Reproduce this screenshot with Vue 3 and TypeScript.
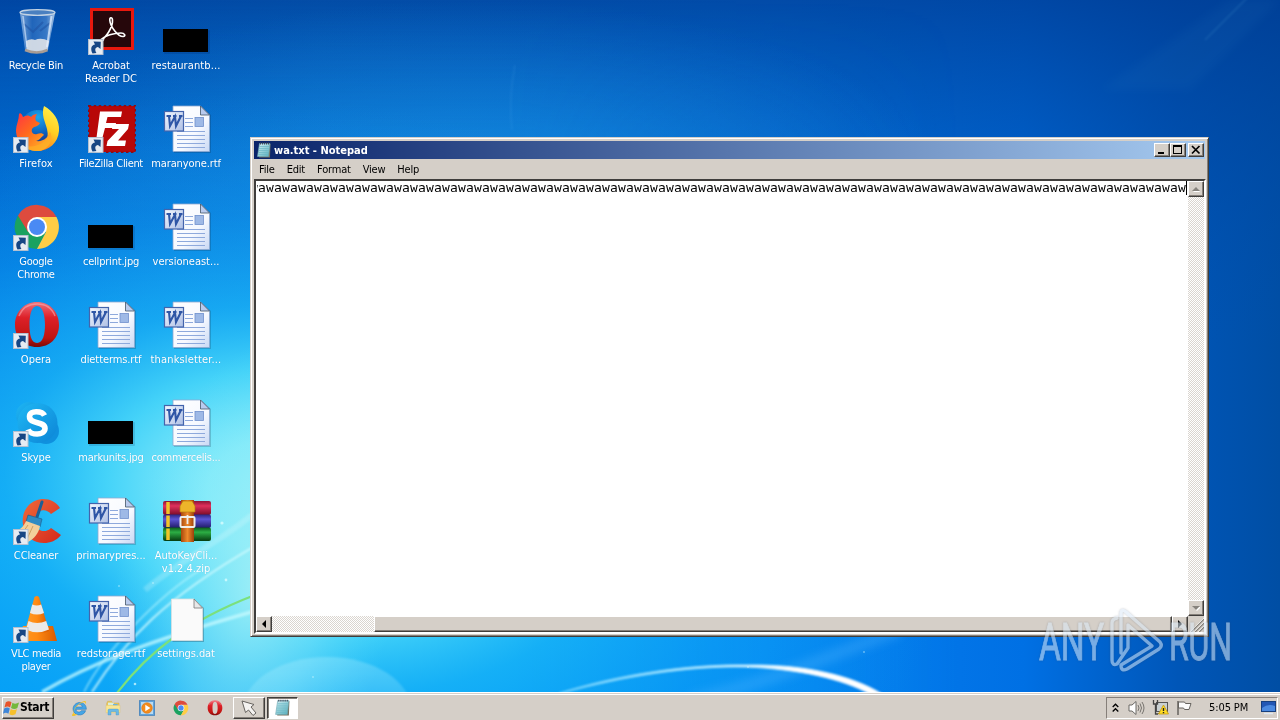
<script setup lang="ts">
interface DesktopItem {
  icon: string
  lines: string[]
  shortcut?: boolean
  spacing?: number
}

const items: DesktopItem[] = [
  { icon: 'bin', lines: ['Recycle Bin'] },
  { icon: 'acrobat', lines: ['Acrobat', 'Reader DC'], shortcut: true, spacing: -0.1 },
  { icon: 'thumb', lines: ['restaurantb...'], spacing: 0.12 },
  { icon: 'firefox', lines: ['Firefox'], shortcut: true, spacing: 0.1 },
  { icon: 'filezilla', lines: ['FileZilla Client'], shortcut: true, spacing: -0.35 },
  { icon: 'word', lines: ['maranyone.rtf'], spacing: -0.1 },
  { icon: 'chrome', lines: ['Google', 'Chrome'], shortcut: true, spacing: -0.25 },
  { icon: 'thumb', lines: ['cellprint.jpg'], spacing: -0.2 },
  { icon: 'word', lines: ['versioneast...'], spacing: 0 },
  { icon: 'opera', lines: ['Opera'], shortcut: true, spacing: 0 },
  { icon: 'word', lines: ['dietterms.rtf'], spacing: -0.1 },
  { icon: 'word', lines: ['thanksletter...'], spacing: 0.15 },
  { icon: 'skype', lines: ['Skype'], shortcut: true, spacing: -0.1 },
  { icon: 'thumb', lines: ['markunits.jpg'], spacing: -0.2 },
  { icon: 'word', lines: ['commercelis...'] },
  { icon: 'ccleaner', lines: ['CCleaner'], shortcut: true, spacing: -0.1 },
  { icon: 'word', lines: ['primarypres...'], spacing: 0 },
  { icon: 'winrar', lines: ['AutoKeyCli...', 'v1.2.4.zip'], spacing: 0 },
  { icon: 'vlc', lines: ['VLC media', 'player'], shortcut: true, spacing: -0.35 },
  { icon: 'word', lines: ['redstorage.rtf'], spacing: 0 },
  { icon: 'file', lines: ['settings.dat'], spacing: -0.1 },
]

const menus = ['File', 'Edit', 'Format', 'View', 'Help']
const content = 'w' + 'aw'.repeat(58)
const launchers = ['ie', 'explorer', 'wmp', 'chrome', 'opera']
</script>

<template>
  <div class="screen">
    <svg class="defs" width="0" height="0" aria-hidden="true">
      <defs>
        <linearGradient id="gGlass" x1="0" x2="1" y1="0" y2="0"><stop offset="0" stop-color="#a9c8ea" stop-opacity=".75" /><stop offset=".35" stop-color="#3b79c6" stop-opacity=".55" /><stop offset=".75" stop-color="#5a93d6" stop-opacity=".6" /><stop offset="1" stop-color="#cfe0f2" stop-opacity=".85" /></linearGradient>
        <linearGradient id="gFox" x1="0" x2=".8" y1=".1" y2="1"><stop offset="0" stop-color="#ff3b3f" /><stop offset=".45" stop-color="#ff6a1c" /><stop offset="1" stop-color="#ffb52a" /></linearGradient>
        <linearGradient id="gTail" x1=".6" x2=".3" y1="0" y2="1"><stop offset="0" stop-color="#fff04a" /><stop offset=".5" stop-color="#ffcf22" /><stop offset="1" stop-color="#ff7a1e" /></linearGradient>
        <radialGradient id="gGlobe" cx=".5" cy=".2" r=".8"><stop offset="0" stop-color="#19a7ee" /><stop offset=".6" stop-color="#0c5dbb" /><stop offset="1" stop-color="#172a86" /></radialGradient>
        <linearGradient id="gOpera" x1="0" x2="0" y1="0" y2="1"><stop offset="0" stop-color="#f0707c" /><stop offset=".35" stop-color="#dd2028" /><stop offset=".8" stop-color="#c01410" /><stop offset="1" stop-color="#7a0808" /></linearGradient>
        <linearGradient id="gSkype" x1="0" x2="1" y1="0" y2="1"><stop offset="0" stop-color="#1fb8f4" /><stop offset="1" stop-color="#0c84d6" /></linearGradient>
        <linearGradient id="gPage" x1="0" x2="1" y1="0" y2="1"><stop offset="0" stop-color="#fff" /><stop offset=".6" stop-color="#f6f9ff" /><stop offset="1" stop-color="#c9d8f4" /></linearGradient>
        <linearGradient id="gBadge" x1="0" x2="1" y1="0" y2="1"><stop offset="0" stop-color="#f4f8ff" /><stop offset="1" stop-color="#aebfe4" /></linearGradient>
        <linearGradient id="gCc" x1="0" x2="1" y1="0" y2="1"><stop offset="0" stop-color="#f06a3a" /><stop offset="1" stop-color="#d4281c" /></linearGradient>
        <linearGradient id="gCone" x1="0" x2="1"><stop offset="0" stop-color="#ff9c26" /><stop offset=".5" stop-color="#ff8a12" /><stop offset="1" stop-color="#d85a00" /></linearGradient>
        <linearGradient id="gRed" x1="0" x2="0" y1="0" y2="1"><stop offset="0" stop-color="#8c1436" /><stop offset=".35" stop-color="#e0305c" /><stop offset="1" stop-color="#7a0c28" /></linearGradient>
        <linearGradient id="gBlu" x1="0" x2="0" y1="0" y2="1"><stop offset="0" stop-color="#2c2680" /><stop offset=".35" stop-color="#5c54d4" /><stop offset="1" stop-color="#201a68" /></linearGradient>
        <linearGradient id="gGrn" x1="0" x2="0" y1="0" y2="1"><stop offset="0" stop-color="#0c5a1c" /><stop offset=".35" stop-color="#2cae44" /><stop offset="1" stop-color="#063c10" /></linearGradient>
        <linearGradient id="gStrap" x1="0" x2="1"><stop offset="0" stop-color="#a8480c" /><stop offset=".5" stop-color="#ee8a2c" /><stop offset="1" stop-color="#9c400a" /></linearGradient>
        <linearGradient id="gPad" x1="0" x2="1" y1="0" y2="1"><stop offset="0" stop-color="#d6f0f4" /><stop offset="1" stop-color="#55aebc" /></linearGradient>
      </defs>

      <symbol id="bin" viewBox="0 0 48 48">
        <path d="M7 6 L12 43 Q24 48 35 43 L42 6 Z" fill="url(#gGlass)" />
        <path d="M13 34 Q18 31 22 33 Q28 30 36 34 L34.500 43 Q24 47 13.500 43 Z" fill="#dfe3e8" opacity=".9" />
        <path d="M12 43 Q24 48 34.500 43" fill="none" stroke="#a89c94" stroke-width="2.500" />
        <path d="M11 17 L20 25 L30 15 M27 24 L37 16" stroke="#1d4fa0" stroke-width="2" opacity=".5" fill="none" />
        <ellipse cx="24.500" cy="5.500" rx="17.500" ry="2.800" fill="#4a80c0" stroke="#c4d4e4" stroke-width="1.300" />
        <path d="M10 9 L14 40" stroke="#dcecff" stroke-width="1.500" opacity=".6" />
        <path d="M38.500 9 L34 40" stroke="#e8f2ff" stroke-width="2" opacity=".7" />
      </symbol>

      <symbol id="acrobat" viewBox="0 0 48 48">
        <rect x="2" y="1" width="44" height="42" fill="#e8180e" />
        <rect x="5" y="4" width="38" height="36" fill="#26070b" />
        <path d="M12 34 C18 31 25 20 24.500 13 C24.300 10 21.500 10 21.800 13.500 C22.500 20 30 29.500 35 29.500 C38.500 29 36.500 26 33 26 C26 26 17 28.500 13 32.500 C10 35.500 12.500 37 16 32" fill="none" stroke="#fff" stroke-width="1.600" />
      </symbol>

      <symbol id="thumb" viewBox="0 0 48 48">
        <rect x="1" y="23" width="46" height="24" rx="1" fill="#003" opacity=".12" />
        <rect x="0" y="22" width="45" height="23" fill="#000" />
      </symbol>

      <symbol id="firefox" viewBox="0 0 48 48">
        <circle cx="25" cy="23" r="18" fill="url(#gGlobe)" />
        <path d="M31 1 C40 6 47 15 46 26 C45 38 36 46 24 46 C30 42 37 36 34 24 C32 16 28 10 31 1 Z" fill="url(#gTail)" />
        <path d="M6 9 C7 7 9 9 10 12 C13 10 16 10 18 12 C19 10 22 9 24 9 C22 12 22 14 23 16 L27 18 C25 22 21 21 19 24 C18 27 20 30 24 29 C27 28 30 28 31 30 C28 32 27 35 23 36 C31 37 35 32 37 27 C40 38 33 46 24 46 C12 46 3 37 3 25 C3 20 6 15 6 9 Z" fill="url(#gFox)" />
        <path d="M37 27 C42 36 34 46 24 46 C18 46 13 44 9 40 C20 44 33 40 37 27 Z" fill="#ffad26" opacity=".75" />
      </symbol>

      <symbol id="filezilla" viewBox="0 0 48 48">
        <rect x="1" y="1" width="46" height="46" fill="#b80808" />
        <rect x=".7" y=".7" width="46.600" height="46.600" fill="none" stroke="#8c0a14" stroke-width="1.400" stroke-dasharray="2.500 2.500" />
        <path d="M12 6.500 H34 L33 12 H19.500 L18 18 H28 L27 23 H17 L12.500 40 H7.500 Z" fill="#fff" />
        <path d="M25 19 H41 L40 24 L30 35.500 H38 L37 41 H18.500 L19.500 36 L31 24 H24 Z" fill="#fff" />
      </symbol>

      <symbol id="chrome" viewBox="0 0 48 48">
        <path d="M24 24 L5 12.500 A22 22 0 0 0 24 46 L33 29 Z" fill="#1aa260" />
        <path d="M24 14 H43.500 A22 22 0 0 1 24 46 L33 29 Z" fill="#ffcd46" />
        <path d="M5 12.500 A22 22 0 0 1 43.500 14 H24 L15 29 Z" fill="#dd4b3e" />
        <circle cx="24" cy="24" r="10" fill="#fff" /><circle cx="24" cy="24" r="8" fill="#4a8af4" />
      </symbol>

      <symbol id="opera" viewBox="0 0 48 48">
        <path fill-rule="evenodd" d="M24 1 C37 1 46 11 46 24 C46 37 37 46 24 46 C11 46 2 37 2 24 C2 11 11 1 24 1 Z M24 5 C18 5 16.500 15 16.500 24 C16.500 33 18 42 24 42 C30 42 32 33 32 24 C32 15 30 5 24 5 Z" fill="url(#gOpera)" />
        <path d="M6 15 C10 5 18 3 24 3 C32 3 39 7 42 15" fill="none" stroke="#fbb" stroke-width="1.500" opacity=".5" />
      </symbol>

      <symbol id="skype" viewBox="0 0 48 48">
        <circle cx="16" cy="16" r="13" fill="url(#gSkype)" /><circle cx="33" cy="32" r="13" fill="#0f90de" />
        <circle cx="24.500" cy="24" r="20" fill="url(#gSkype)" />
        <path d="M31.500 16.500 C29 11.500 16.500 11 16.500 17.500 C16.500 26 32 21.500 32 29.500 C31.500 37 17.500 36.500 15 30.500" fill="none" stroke="#fff" stroke-width="5.600" />
      </symbol>

      <symbol id="word" viewBox="0 0 48 48">
        <path d="M11 2 H39 L48 10 V48 H11 Z" fill="#123" opacity=".2" />
        <path d="M10 1 H37.500 L46.500 10 V46.500 H10 Z" fill="url(#gPage)" stroke="#8fa8d0" stroke-width=".8" />
        <path d="M37.500 1 V10 H46.500 Z" fill="#b9cbee" stroke="#456" stroke-width=".8" />
        <path d="M22 13.500 H30 M22 17.500 H30 M22 21.500 H30 M14 26.500 H42 M14 30.500 H42 M14 34.500 H42 M14 38.500 H42 M14 42.500 H42" stroke="#8ea9dc" stroke-width="1" />
        <rect x="32" y="12.500" width="8.500" height="9" fill="#9eb9e6" stroke="#6f90cc" stroke-width=".8" />
        <rect x="1.500" y="6.500" width="19" height="19.500" fill="url(#gBadge)" stroke="#4464ac" stroke-width="1.200" />
        <path d="M3.500 11 H8 M10 11 H13.500 M16 11 H19.500 M6 11 L7 21 L12 11.500 L13 21 L18 11" fill="none" stroke="#2f56a6" stroke-width="2.100" />
      </symbol>

      <symbol id="file" viewBox="0 0 48 48">
        <path d="M9.500 5 H32 L41 13 V47 H9.500 Z" fill="#234" opacity=".3" />
        <path d="M8.500 4 H31 L39.500 13 V45.500 H8.500 Z" fill="#fafafa" stroke="#dcdfe0" stroke-width=".8" />
        <path d="M31 4 V13 H39.500 Z" fill="#e8e8e8" stroke="#777" stroke-width=".8" />
      </symbol>

      <symbol id="ccleaner" viewBox="0 0 48 48">
        <path fill="url(#gCc)" d="M47 11 L38 17 C31 9 21 15 22 25 C23 34 32 37 38 31 L48 38 C40 48 26 48 18 42 C8 33 7 18 15 9 C24 -1 40 0 47 11 Z" />
        <path d="M29 5 L24 20" stroke="#1d5f96" stroke-width="3" stroke-linecap="round" />
        <path d="M15 18 L29 22 L27 30 L13 25 Z" fill="#2f8cc4" stroke="#1a5a8a" stroke-width=".6" />
        <path d="M13 24 L27 29 C26 36 21 42 15 45 L1 35 C7 33 11 29 13 24 Z" fill="#f3cf9a" />
        <path d="M15 28 L8 38 M20 29 L14 42" stroke="#cf9f62" stroke-width="1" />
      </symbol>

      <symbol id="winrar" viewBox="0 0 48 48">
        <rect x="0" y="4" width="48" height="14" rx="2" fill="url(#gRed)" />
        <rect x="0" y="17.500" width="48" height="13.500" rx="2" fill="url(#gBlu)" />
        <rect x="0" y="30.500" width="48" height="13.500" rx="2" fill="url(#gGrn)" />
        <path d="M5 5 V17 M5 18.500 V30 M5 31.500 V43" stroke="#f0c428" stroke-width="3.500" />
        <rect x="18" y="3" width="13" height="42" fill="url(#gStrap)" />
        <path d="M20 4 H29 L32 9 V15 H17 V9 Z" fill="#edb52a" stroke="#b87a10" stroke-width=".7" />
        <rect x="17.500" y="20" width="14" height="10" rx="1" fill="none" stroke="#f0eee8" stroke-width="2" />
        <path d="M24.500 18 V27" stroke="#eee" stroke-width="1.800" />
      </symbol>

      <symbol id="vlc" viewBox="0 0 48 48">
        <path d="M10 31 H40 L44 46 H4 Z" fill="url(#gCone)" />
        <path d="M21.500 2 Q24 0 26 2 L36 36 Q24 42 12 36 Z" fill="url(#gCone)" />
        <path d="M19.200 9.500 Q24 11.500 28.200 9.500 L31 18 Q24 21 17 18 Z M15.500 26 Q24 30 33.200 26 L36 34.500 Q24 40 13 34.500 Z" fill="#eceae8" />
      </symbol>

      <symbol id="shortcut" viewBox="0 0 16 16">
        <rect x=".5" y=".5" width="14.500" height="15" fill="#e6ebf2" stroke="#b4c0d0" />
        <path d="M4.500 14.500 C2 9.500 3.500 6 7 5.500 L5.500 2.500 L12.800 2.800 L12.500 10 L10 8 C7 8.500 6.500 11 8.500 14 Z" fill="#174684" />
      </symbol>

      <symbol id="ie" viewBox="0 0 48 48">
        <path d="M44 32 H31 C27 39 15 37 15 28 H46 C47 2 9 0 6 26 C5 48 38 52 44 32 Z M15 21 C17 11 32 10 34 21 Z" fill="#45a6e6" stroke="#1c70b8" stroke-width="1.500" fill-rule="evenodd" />
        <path d="M7 40 C-4 50 10 51 20 43 C7 44 5 36 13 25 C21 13 35 5 41 7 C45 9 43 13 41 16 C49 7 45 0 34 5 C20 11 6 26 7 40 Z" fill="#f2c32c" />
      </symbol>
      <symbol id="explorer" viewBox="0 0 48 48">
        <path d="M5 10 L8 4 H20 L23 9 H42 V20 H5 Z" fill="#e9c85c" stroke="#c79c34" />
        <path d="M9 8 H26 V16 H9 Z" fill="#d9efe0" /><path d="M24 12 H38 V18 H24 Z" fill="#68b4e4" />
        <path d="M3 16 H45 V38 H3 Z" fill="#f9e694" stroke="#dfbd5a" />
        <path d="M9 45 V31 Q9 27 14 27 H36 Q41 27 41 31 V45 H33 V35 H18 V45 Z" fill="#69b9e6" stroke="#3d8cc0" />
      </symbol>
      <symbol id="wmp" viewBox="0 0 48 48">
        <rect x="1" y="2" width="46" height="44" fill="#5fa3dc" stroke="#3a78b4" stroke-width="2" />
        <rect x="6" y="6" width="36" height="36" fill="#b9dbf2" />
        <circle cx="24" cy="24" r="16" fill="#f38b1d" stroke="#d96a08" stroke-width="1.500" /><path d="M19 14 L34 24 L19 34 Z" fill="#fff" />
      </symbol>
      <symbol id="notepad" viewBox="0 0 16 16">
        <path d="M4 2 H14.500 L14 15.500 H3 Z" fill="#76705c" />
        <path d="M3.500 1.500 H14 L12.500 14.500 H1.500 Z" fill="url(#gPad)" stroke="#70a8b4" stroke-width=".6" />
        <path d="M3.500 4.500 H13 M3.200 6.500 H12.800 M2.800 8.500 H12.500 M2.500 10.500 H12.300 M2.300 12.500 H12.200" stroke="#68b6c4" stroke-width=".7" />
        <path d="M4 1.500 H14" stroke="#445" stroke-width="1.800" stroke-dasharray="1 1" />
      </symbol>
    </svg>

    <svg class="wallpaper" viewBox="0 0 1280 692" preserveAspectRatio="none" aria-hidden="true">
      <defs>
        <linearGradient id="base" x1="0" x2="1" y1="0" y2="0"><stop offset="0" stop-color="#006cdc" /><stop offset=".25" stop-color="#0f88ea" /><stop offset=".6" stop-color="#0880f0" /><stop offset=".8" stop-color="#0070e4" /><stop offset=".92" stop-color="#0056b8" /><stop offset="1" stop-color="#004ea4" /></linearGradient>
        <linearGradient id="dark" x1="0" x2="0" y1="0" y2="1"><stop offset="0" stop-color="#003c94" stop-opacity=".78" /><stop offset=".25" stop-color="#0048a4" stop-opacity=".45" /><stop offset=".5" stop-color="#0050b0" stop-opacity="0" /></linearGradient>
        <linearGradient id="leftGlow" x1="0" x2="0" y1="0" y2="1"><stop offset="0" stop-color="#00a0f8" stop-opacity="0" /><stop offset=".3" stop-color="#0090f0" stop-opacity=".3" /><stop offset=".75" stop-color="#00a0f6" stop-opacity="1" /><stop offset="1" stop-color="#00a0f8" /></linearGradient>
        <linearGradient id="leftFade" x1="0" x2="1"><stop offset="0" stop-color="#fff" /><stop offset=".4" stop-color="#fff" /><stop offset=".75" stop-color="#000" /></linearGradient>
        <mask id="leftMask"><rect width="1280" height="692" fill="url(#leftFade)" /></mask>
        <radialGradient id="glow" gradientUnits="userSpaceOnUse" cx="0" cy="0" r="1" gradientTransform="translate(310 500) rotate(8) scale(640 400)"><stop offset="0" stop-color="#b4f6fa" /><stop offset=".16" stop-color="#90eefa" /><stop offset=".32" stop-color="#48d6f9" stop-opacity=".95" /><stop offset=".48" stop-color="#20b8f6" stop-opacity=".65" /><stop offset=".7" stop-color="#18a4f4" stop-opacity=".28" /><stop offset="1" stop-color="#1290ee" stop-opacity="0" /></radialGradient>
        <radialGradient id="pale" gradientUnits="userSpaceOnUse" cx="0" cy="0" r="1" gradientTransform="translate(255 590) rotate(-78) scale(260 140)"><stop offset="0" stop-color="#a4f0f6" stop-opacity=".85" /><stop offset=".5" stop-color="#80e8f8" stop-opacity=".5" /><stop offset="1" stop-color="#50dcfa" stop-opacity="0" /></radialGradient>
        <radialGradient id="topGlow" gradientUnits="userSpaceOnUse" cx="0" cy="0" r="1" gradientTransform="translate(470 190) scale(480 190)"><stop offset="0" stop-color="#2094e2" stop-opacity=".8" /><stop offset="1" stop-color="#1478d0" stop-opacity="0" /></radialGradient>
        <linearGradient id="arc" gradientUnits="userSpaceOnUse" x1="560" x2="880" y1="0" y2="0"><stop offset="0" stop-color="#7ed8ff" stop-opacity=".8" /><stop offset=".5" stop-color="#b4e8ff" /><stop offset=".75" stop-color="#fff" /></linearGradient>
        <linearGradient id="disc" x1="0" x2="0" y1="0" y2="1"><stop offset="0" stop-color="#c4f6ff" stop-opacity=".28" /><stop offset="1" stop-color="#a0ecff" stop-opacity=".06" /></linearGradient>
        <filter id="soft" x="-20%" y="-20%" width="140%" height="140%"><feGaussianBlur stdDeviation=".8" /></filter>
        <filter id="haze" x="-30%" y="-30%" width="160%" height="160%"><feGaussianBlur stdDeviation="5" /></filter>
      </defs>
      <rect width="1280" height="692" fill="url(#base)" />
      <rect width="1280" height="692" fill="url(#dark)" />
      <rect width="1280" height="692" fill="url(#topGlow)" />
      <rect width="1280" height="692" fill="url(#leftGlow)" mask="url(#leftMask)" />
      <rect width="1280" height="692" fill="url(#glow)" />
      <rect width="1280" height="692" fill="url(#pale)" />
      <path d="M1100 90 L1230 0 H1280 L1190 90 Z" fill="#3a90c8" opacity=".07" filter="url(#haze)" />
      <path d="M1205 40 L1250 -5" stroke="#58a8d8" stroke-width="1.500" opacity=".2" filter="url(#soft)" />
      <path d="M512 130 C509 105 511 85 515 65" fill="none" stroke="#68b8f0" stroke-width="1.500" opacity=".14" filter="url(#soft)" />
      <path d="M690 700 C780 680 830 655 900 630" fill="none" stroke="#58b8ff" stroke-width="12" opacity=".3" filter="url(#haze)" />
      <ellipse cx="327" cy="712" rx="85" ry="55" fill="url(#disc)" filter="url(#soft)" />
      <g fill="none" filter="url(#soft)">
        <path d="M559 693 C620 674 690 664 745 665 C800 664 850 674 882 694 L870 694 C842 679 800 669 745 667 C690 666 625 676 563 693 Z" fill="url(#arc)" stroke="url(#arc)" stroke-width=".8" />
        <path d="M42 692 C90 664 145 642 255 611" stroke="#c8fbff" stroke-width="3.500" opacity=".75" />
        <path d="M84 692 C105 650 160 595 200 570" stroke="#c4faff" stroke-width="1.500" opacity=".6" />
        <path d="M92 692 C125 640 165 598 255 546" stroke="#d8fdff" stroke-width="2" opacity=".8" />
        <path d="M145 590 C180 560 215 545 252 515" stroke="#dffcff" stroke-width="6" opacity=".25" />
      </g>
      <path d="M117 693 C150 650 190 620 255 595" fill="none" stroke="#7be07c" stroke-width="2.200" />
      <g fill="#e4ffff" opacity=".7"><circle cx="222" cy="523" r="1.600" /><circle cx="226" cy="580" r="1.400" /><circle cx="153" cy="583" r=".8" /><circle cx="135" cy="684" r="1.300" /><circle cx="119" cy="586" r=".8" /><circle cx="748" cy="667" r=".7" /><circle cx="864" cy="652" r=".8" /><circle cx="313" cy="677" r=".8" /></g>
    </svg>

    <main class="desktop">
      <figure v-for="(item, i) in items" :key="i" class="item">
        <div class="picture">
          <svg width="48" height="48"><use :href="'#' + item.icon" /></svg>
          <svg v-if="item.shortcut" class="arrow" width="16" height="16"><use href="#shortcut" /></svg>
        </div>
        <figcaption :style="{ letterSpacing: (item.spacing ?? -0.25) + 'px' }"><span v-for="line in item.lines" :key="line">{{ line }}</span></figcaption>
      </figure>
    </main>

    <section class="window">
      <header class="titlebar">
        <svg width="16" height="16"><use href="#notepad" /></svg>
        <h1>wa.txt - Notepad</h1>
        <div class="controls">
          <button class="btn" aria-label="Minimize"><svg width="12" height="10"><rect x="2" y="7" width="6" height="2" /></svg></button>
          <button class="btn" aria-label="Maximize"><svg width="12" height="10"><path d="M1 0 H10 V9 H1 Z M2 2 V8 H9 V2 Z" fill-rule="evenodd" /></svg></button>
          <button class="btn close" aria-label="Close"><svg width="12" height="10"><path d="M2 1 L9.500 8.500 M9.500 1 L2 8.500" stroke="#000" stroke-width="1.700" /></svg></button>
        </div>
      </header>
      <nav class="menubar"><span v-for="m in menus" :key="m">{{ m }}</span></nav>
      <div class="editor">
        <div class="text"><span>{{ content }}</span></div>
        <div class="vbar">
          <div class="btn"><svg width="8" height="8"><path d="M5 3 L8 7 H1 Z" fill="#fff" /><path d="M4 2 L8 6 H0 Z" fill="#87837d" /></svg></div>
          <div class="btn"><svg width="8" height="8"><path d="M5 7 L9 3 H1 Z" fill="#fff" /><path d="M4 6 L8 2 H0 Z" fill="#87837d" /></svg></div>
        </div>
        <div class="hbar">
          <div class="btn"><svg width="8" height="8"><path d="M6 0 V8 L2 4 Z" /></svg></div>
          <div class="track"><div class="btn thumb"></div></div>
          <div class="btn"><svg width="8" height="8"><path d="M2 0 V8 L6 4 Z" /></svg></div>
        </div>
        <svg class="grip" width="16" height="16"><path d="M3 16 L16 3 M7 16 L16 7 M11 16 L16 11" stroke="#87837d" stroke-width="1.500" /><path d="M2 16 L16 2 M6 16 L16 6 M10 16 L16 10" stroke="#fff" stroke-width=".7" /></svg>
      </div>
    </section>

    <footer class="taskbar">
      <button class="btn start">
        <svg width="17" height="18" viewBox="0 0 18 18">
          <path d="M3 3 Q6 .5 9 3 L7.500 8.500 Q5 6.500 1.500 8.500 Z" fill="#e8532a" />
          <path d="M10 3.500 Q13 5.500 17 3.200 L15.200 9 Q12 11 8.500 9 Z" fill="#74b83c" />
          <path d="M1.200 9.500 Q4.500 7.500 7.200 9.500 L5.700 15 Q3 13 0 15 Z" fill="#3f86d8" />
          <path d="M8.200 10 Q11.500 12 14.800 10 L13.200 15.700 Q10 17.500 6.700 15.500 Z" fill="#f6c02c" />
        </svg>
        <b>Start</b>
      </button>
      <nav class="launch"><svg v-for="l in launchers" :key="l" width="16" height="16"><use :href="'#' + l" /></svg></nav>
      <div class="btn task">
        <svg width="18" height="20" viewBox="0 0 18 20"><path d="M2 3 L14 6.500 L11 9 L16 15 L13 17.500 L8.500 12 L5.500 14.500 Z" fill="#f4f2f0" stroke="#66625e" stroke-width="1" /></svg>
      </div>
      <div class="task active"><svg width="17" height="17"><use href="#notepad" /></svg></div>
      <div class="tray">
        <svg class="chev" width="7" height="10" viewBox="0 0 7 10"><path d="M.7 4 L3.500 1.200 L6.300 4 M.7 8.500 L3.500 5.700 L6.300 8.500" fill="none" stroke="#000" stroke-width="1.300" /></svg>
        <svg class="vol" width="17" height="16" viewBox="0 0 17 16"><path d="M1 5 H4 L8 1.500 V14.500 L4 11 H1 Z" fill="#fff" stroke="#6b6965" /><path d="M10 5 Q12 8 10 11 M12 3.500 Q15 8 12 12.500 M14 2 Q18 8 14 14" fill="none" stroke="#77746f" /></svg>
        <svg class="net" width="17" height="17" viewBox="0 0 17 17"><rect x="4.500" y="3.500" width="11" height="9" fill="#c9d0d2" stroke="#555" /><path d="M6 14.500 H14" stroke="#555" /><path d="M1.500 1 V5 H5.500 V1 M3.500 5 V15 H6" fill="none" stroke="#444" stroke-width="1.300" /><path d="M11.500 6 L16.500 15 H6.500 Z" fill="#ffdc22" stroke="#c59a10" stroke-width=".8" /><path d="M11.500 9 V12 M11.500 12.900 V14.200" stroke="#222" stroke-width="1.400" /></svg>
        <svg class="flag" width="16" height="16" viewBox="0 0 16 16"><path d="M2 1 V15" stroke="#66635f" stroke-width="1.500" /><path d="M2.500 2 H8.500 L9.500 3.500 H15 L13 9.500 H8.500 L7.500 8 H2.500 Z" fill="#fbfbfb" stroke="#66635f" /></svg>
        <time>5:05 PM</time>
        <svg class="show" width="15" height="14" viewBox="0 0 15 14"><rect x=".5" y=".5" width="14" height="10" fill="#2257b4" stroke="#17407e" /><path d="M1 7 Q7 2 14 5 V10 H1 Z" fill="#4b8ae0" /><path d="M3 12.500 H12" stroke="#dfe8f2" stroke-width="1.500" /></svg>
      </div>
    </footer>

    <svg class="watermark" width="204" height="72" viewBox="1034 604 204 72">
      <g font-family="Roboto, sans-serif" font-weight="400" font-size="52" fill="#dbe9f6" stroke="#dbe9f6" stroke-width=".9">
        <text x="1039" y="660" textLength="65" lengthAdjust="spacingAndGlyphs">ANY</text>
        <text x="1169" y="660" textLength="63" lengthAdjust="spacingAndGlyphs">RUN</text>
      </g>
      <g fill="none" stroke="#dbe9f6" stroke-width="3.400" stroke-linejoin="round" stroke-linecap="round">
        <path d="M1121 653 V614 Q1121 608 1126 612 L1160 642 Q1163 646 1159 649 L1127 669 Q1121 672 1121 665 L1152 646 L1128 625 V648 L1117 664 Q1112 666 1112 660 V623 Q1112 619 1117 618" />
      </g>
    </svg>
  </div>
</template>

<style>
html, body { margin: 0; overflow: hidden; }
</style>

<style scoped>
.screen {
  position: relative;
  width: 1280px;
  height: 720px;
  display: flex;
  flex-direction: column;
  overflow: hidden;
  font: 11px/13px "DejaVu Sans Condensed", "DejaVu Sans", sans-serif;
  letter-spacing: -0.2px;
  color: #000;
}
.defs, .wallpaper { position: absolute; top: 0; left: 0; }
.wallpaper { width: 1280px; height: 692px; }
svg { display: block; flex: none; }

.desktop {
  position: relative;
  flex: 1;
  display: grid;
  grid-template-columns: repeat(3, 74px);
  grid-auto-rows: 98px;
  column-gap: 1px;
  align-content: start;
  margin: 7px 0 0 -1px;
}
.item { margin: 0; }
.picture { position: relative; width: 48px; height: 48px; margin: 0 auto; left: 1px; }
.arrow { position: absolute; left: 0; bottom: 0; }
figcaption {
  display: flex;
  flex-direction: column;
  align-items: center;
  margin-top: 4px;
  color: #fff;
  text-shadow: 0 0 1px rgba(0, 50, 110, .25);
  white-space: nowrap;
}

.btn {
  box-sizing: border-box;
  display: flex;
  align-items: center;
  justify-content: center;
  padding: 0;
  border: 1px solid;
  border-color: #fff #403e3c #403e3c #fff;
  border-radius: 0;
  background: #d5cfc8;
  box-shadow: inset -1px -1px #857f79;
}

.window {
  position: absolute;
  left: 250px;
  top: 137px;
  box-sizing: border-box;
  width: 959px;
  height: 500px;
  display: flex;
  flex-direction: column;
  padding: 2px;
  border: 1px solid;
  border-color: #d5cfc8 #403e3c #403e3c #d5cfc8;
  background: #d5cfc8;
  box-shadow: inset 1px 1px #fff, inset -1px -1px #857f79;
}
.titlebar {
  height: 18px;
  margin: 1px 1px 0;
  display: flex;
  align-items: center;
  padding: 0 1px 0 2px;
  background: linear-gradient(90deg, #0a246a, #a6caf0);
}
h1 { flex: 1; margin: 0 0 0 2px; font-size: 11px; font-weight: 700; color: #fff; letter-spacing: 0; }
.controls { display: flex; }
.controls .btn { width: 16px; height: 14px; }
.controls .close { margin-left: 2px; }
.menubar { height: 20px; display: flex; align-items: center; gap: 12px; padding-left: 6px; }
.editor {
  flex: 1;
  display: grid;
  grid-template-columns: 1fr 16px;
  grid-template-rows: 1fr 16px;
  margin: 0 0 0 1px;
  border: 2px solid;
  border-color: #403e3c #fff #fff #403e3c;
  background: #fff;
  min-height: 0;
}
.text {
  min-width: 0;
  margin: 0 1px;
  display: flex;
  justify-content: flex-end;
  overflow: hidden;
  font: 13px/14px "DejaVu Sans Mono", monospace;
  letter-spacing: 0.174px;
  white-space: nowrap;
}
.text span { height: 14px; border-right: 1px solid #000; }
.vbar, .track, .hbar {
  background: repeating-conic-gradient(#fff 0 25%, #dad5cf 0 50%) 0 0 / 2px 2px;
}
.vbar { display: flex; flex-direction: column; justify-content: space-between; }
.vbar .btn { height: 16px; }
.hbar { display: flex; }
.hbar .btn { width: 16px; height: 16px; }
.track { flex: 1; display: flex; justify-content: flex-end; }
.track .thumb { width: 798px; }
.grip { background: #d5cfc8; }

.taskbar {
  position: relative;
  height: 28px;
  box-sizing: border-box;
  display: flex;
  align-items: center;
  padding: 2px 2px 0;
  background: #d5cfc8;
  box-shadow: inset 0 1px #d5cfc8, inset 0 2px #fff;
}
.start { width: 52px; height: 22px; justify-content: flex-start; padding-left: 0; gap: 0; font: inherit; }
.start b { font-size: 12px; letter-spacing: -0.3px; }
.launch { display: flex; gap: 18px; margin: 0 10px 0 17px; }
.task { width: 32px; height: 22px; }
.task.active {
  box-sizing: border-box;
  display: flex;
  align-items: center;
  justify-content: center;
  width: 31px;
  margin-left: 2px;
  border: 1px solid;
  border-color: #403e3c #fff #fff #403e3c;
  box-shadow: inset 1px 1px #857f79;
  background: #fff;
}
.tray {
  box-sizing: border-box;
  width: 172px;
  height: 22px;
  margin-left: auto;
  display: flex;
  align-items: center;
  padding-left: 5px;
  border: 1px solid;
  border-color: #857f79 #fff #fff #857f79;
}
.vol { margin-left: 9px; }
.net { margin-left: 7px; }
.flag { margin-left: 7px; }
time { margin-left: 17px; letter-spacing: -0.1px; }
.show { margin-left: auto; margin-right: 1px; }

.watermark { position: absolute; left: 1034px; top: 604px; opacity: .55; filter: drop-shadow(0 0 1px rgba(60, 70, 90, .5)); }
</style>
